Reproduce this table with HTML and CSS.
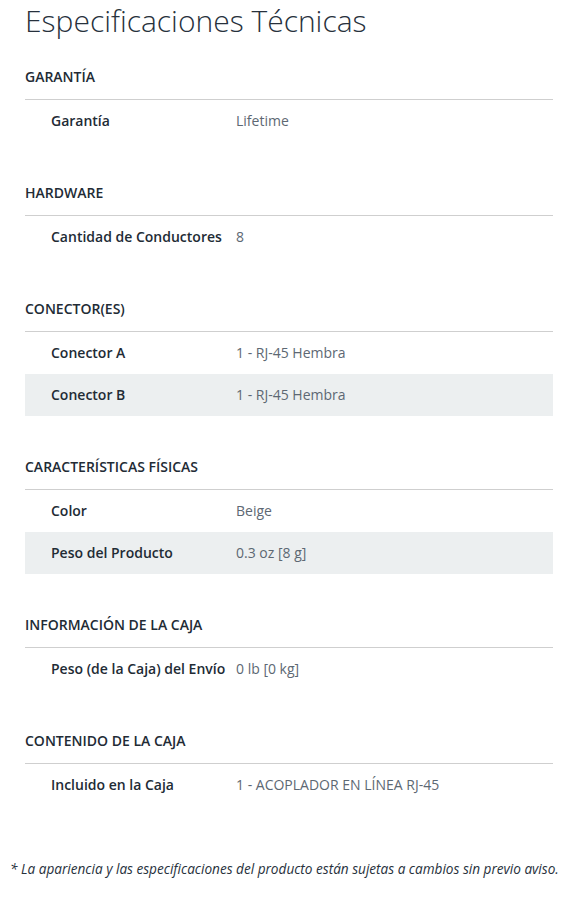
FILE: index.html
```html
<!DOCTYPE html>
<html lang="es">
<head>
<meta charset="utf-8">
<link rel="stylesheet" href="styles.css">
</head>
<body>
<div class="specs">
  <h1 class="title">Especificaciones Técnicas</h1>

  <section class="group">
    <h3 class="group-head">GARANTÍA</h3>
    <div class="row"><div class="label">Garantía</div><div class="value">Lifetime</div></div>
  </section>

  <section class="group">
    <h3 class="group-head">HARDWARE</h3>
    <div class="row"><div class="label">Cantidad de Conductores</div><div class="value">8</div></div>
  </section>

  <section class="group">
    <h3 class="group-head">CONECTOR(ES)</h3>
    <div class="row"><div class="label">Conector A</div><div class="value">1 - RJ-45 Hembra</div></div>
    <div class="row alt"><div class="label">Conector B</div><div class="value">1 - RJ-45 Hembra</div></div>
  </section>

  <section class="group">
    <h3 class="group-head">CARACTERÍSTICAS FÍSICAS</h3>
    <div class="row"><div class="label">Color</div><div class="value">Beige</div></div>
    <div class="row alt"><div class="label">Peso del Producto</div><div class="value">0.3 oz [8 g]</div></div>
  </section>

  <section class="group">
    <h3 class="group-head">INFORMACIÓN DE LA CAJA</h3>
    <div class="row"><div class="label">Peso (de la Caja) del Envío</div><div class="value">0 lb [0 kg]</div></div>
  </section>

  <section class="group">
    <h3 class="group-head">CONTENIDO DE LA CAJA</h3>
    <div class="row"><div class="label">Incluido en la Caja</div><div class="value">1 - ACOPLADOR EN LÍNEA RJ-45</div></div>
  </section>
</div>
<p class="note">* La apariencia y las especificaciones del producto están sujetas a cambios sin previo aviso.</p>
</body>
</html>
```

FILE: styles.css
```css
html, body {
  margin: 0;
  padding: 0;
  background: #ffffff;
}
body {
  font-family: "Open Sans", "Liberation Sans", sans-serif;
  color: #222b35;
}
.specs {
  padding: 0 20px 0 25px;
}
.title {
  margin: 0;
  padding-top: 1px;
  font-size: 30px;
  line-height: 40px;
  font-weight: 300;
  color: #27313c;
}
.group {
  margin-top: 26px;
}
.group + .group {
  margin-top: 41px;
}
.group-head {
  margin: 0;
  padding-bottom: 12px;
  border-bottom: 1px solid #cfcfcf;
  font-size: 14px;
  line-height: 20px;
  font-weight: 600;
  color: #222b35;
}
.row {
  display: grid;
  grid-template-columns: 211px 1fr;
  height: 42px;
  align-items: center;
  font-size: 14px;
  line-height: 20px;
}
.row.alt {
  background: #eceff0;
}
.label {
  padding-left: 26px;
  font-weight: 600;
  color: #222b35;
}
.value {
  color: #5d6873;
}
.note {
  margin: 53px 0 0 0;
  padding-left: 10px;
  font-size: 13.6px;
  line-height: 20px;
  font-style: italic;
  color: #27313c;
}
```
